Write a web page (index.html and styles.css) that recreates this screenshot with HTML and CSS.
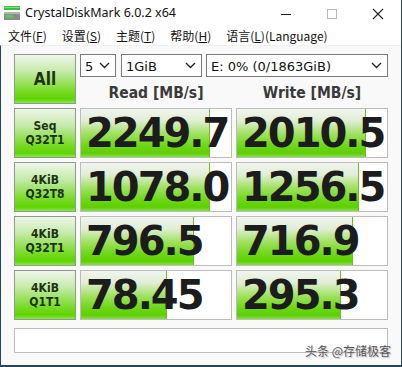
FILE: index.html
```html
<!DOCTYPE html>
<html>
<head>
<meta charset="utf-8">
<link rel="stylesheet" href="styles.css">
</head>
<body>
<div class="window">
  <div class="titlebar">
    <svg class="appicon" width="16" height="14" viewBox="0 0 16 14">
      <rect x="0" y="0" width="16" height="4" fill="#3fbf3f"/>
      <rect x="0" y="1" width="16" height="1" fill="#7fe07f"/>
      <rect x="0" y="6" width="16" height="8" fill="#8c8c8c"/>
      <rect x="0" y="6" width="16" height="2" fill="#b4b4b4"/>
      <rect x="2" y="9" width="7" height="3" fill="#59c959"/>
    </svg>
    <span class="title">CrystalDiskMark 6.0.2 x64</span>
    <div class="controls">
      <svg width="46" height="24" viewBox="0 0 46 24"><rect x="18" y="13" width="10" height="1" fill="#222"/></svg>
      <svg width="46" height="24" viewBox="0 0 46 24"><rect x="18.5" y="8.5" width="9" height="9" fill="none" stroke="#b8b8b8" stroke-width="1"/></svg>
      <svg width="46" height="24" viewBox="0 0 46 24"><path d="M18 8 L28 18 M28 8 L18 18" stroke="#222" stroke-width="1.1" fill="none"/></svg>
    </div>
  </div>
  <div class="menubar">
    <span class="menu">文件(<u>F</u>)</span>
    <span class="menu">设置(<u>S</u>)</span>
    <span class="menu">主题(<u>T</u>)</span>
    <span class="menu">帮助(<u>H</u>)</span>
    <span class="menu">语言(<u>L</u>)(Language)</span>
  </div>
  <div class="client">
    <div class="grid">
      <div class="btn all">All</div>
      <div class="selects">
        <div class="select s1"><span>5</span><svg class="chev" width="11" height="7" viewBox="0 0 11 7"><path d="M1 1 L5.5 5.5 L10 1" stroke="#222" stroke-width="1.3" fill="none"/></svg></div>
        <div class="select s2"><span>1GiB</span><svg class="chev" width="11" height="7" viewBox="0 0 11 7"><path d="M1 1 L5.5 5.5 L10 1" stroke="#222" stroke-width="1.3" fill="none"/></svg></div>
        <div class="select s3"><span>E: 0% (0/1863GiB)</span><svg class="chev" width="11" height="7" viewBox="0 0 11 7"><path d="M1 1 L5.5 5.5 L10 1" stroke="#222" stroke-width="1.3" fill="none"/></svg></div>
      </div>
      <div class="head">Read [MB/s]</div>
      <div class="head">Write [MB/s]</div>

      <div class="btn label">Seq<br>Q32T1</div>
      <div class="val"><div class="bar" style="width:86%"></div><span class="num">2249.7</span></div>
      <div class="val"><div class="bar" style="width:86%"></div><span class="num">2010.5</span></div>

      <div class="btn label">4KiB<br>Q32T8</div>
      <div class="val"><div class="bar" style="width:86%"></div><span class="num">1078.0</span></div>
      <div class="val"><div class="bar" style="width:81%"></div><span class="num">1256.5</span></div>

      <div class="btn label">4KiB<br>Q32T1</div>
      <div class="val"><div class="bar" style="width:75%"></div><span class="num">796.5</span></div>
      <div class="val"><div class="bar" style="width:77%"></div><span class="num">716.9</span></div>

      <div class="btn label">4KiB<br>Q1T1</div>
      <div class="val"><div class="bar" style="width:57%"></div><span class="num">78.45</span></div>
      <div class="val"><div class="bar" style="width:69%"></div><span class="num">295.3</span></div>

      <div class="comment"></div>
    </div>
    <div class="watermark">头条 @存储极客</div>
  </div>
</div>
</body>
</html>
```

FILE: styles.css
```css
* { box-sizing: border-box; }
html, body { margin: 0; padding: 0; }
body {
  width: 402px;
  height: 367px;
  overflow: hidden;
  background: #fff;
  font-family: "Noto Sans", "Noto Sans CJK SC", sans-serif;
}
.window {
  width: 402px;
  height: 367px;
  display: flex;
  flex-direction: column;
  border-right: 1px solid #2a4a5c;
  background: #fff;
}
.titlebar {
  height: 25px;
  display: flex;
  align-items: center;
  flex-shrink: 0;
}
.appicon { margin-left: 4px; margin-top: 0px; }
.title {
  margin-left: 5px;
  font-size: 12.5px;
  color: #111;
  font-family: "Noto Sans", sans-serif;
}
.controls {
  margin-left: auto;
  display: flex;
  margin-right: 0px;
}
.controls svg { display: block; }
.menubar {
  height: 20px;
  display: flex;
  align-items: center;
  gap: 15px;
  padding-left: 8px;
  flex-shrink: 0;
  font-size: 12px;
  color: #111;
  font-family: "Noto Sans CJK SC", sans-serif;
}
.menu u { text-decoration: underline; text-underline-offset: 1px; }
.client {
  flex: 1;
  position: relative;
  background: #f9f9f9;
  border-left: 1px solid #24475a;
  border-bottom: 2px solid #24475a;
  border-top: 1px solid #f0f0f0;
  padding: 8px 0 0 13px;
}
.grid {
  display: grid;
  grid-template-columns: 62px 152px 152px;
  grid-template-rows: 23px 23px 50px 50px 50px 50px 29px;
  column-gap: 4px;
  row-gap: 4px;
}
.btn {
  border: 1px solid #8f9a8c;
  background: linear-gradient(to bottom, #eef6ea 0%, #c4eaa8 35%, #78db26 75%, #5fd400 92%, #8be84e 100%);
  display: flex;
  align-items: center;
  justify-content: center;
  text-align: center;
  color: #1c3410;
  font-family: "DejaVu Sans Condensed", "DejaVu Sans", sans-serif;
  font-weight: bold;
}
.all {
  grid-row: 1 / span 2;
  font-size: 17px;
}
.label {
  font-size: 12px;
  line-height: 14px;
}
.selects {
  grid-column: 2 / span 2;
  display: flex;
  gap: 4px;
}
.select {
  height: 23px;
  border: 1px solid #7a7a7a;
  background: #fff;
  display: flex;
  align-items: center;
  justify-content: space-between;
  padding: 0 5px 0 4px;
  font-size: 13px;
  color: #111;
  font-family: "DejaVu Sans", sans-serif;
}
.select span { margin-top: 1px; }
.s1 { width: 36px; }
.s2 { width: 81px; margin-left: 1px; }
.s3 { flex: 1; }
.chev { display: block; }
.head {
  display: flex;
  align-items: center;
  justify-content: center;
  font-family: "DejaVu Sans Condensed", "DejaVu Sans", sans-serif;
  font-weight: bold;
  font-size: 15.5px;
  color: #3a3a3a;
}
.val {
  position: relative;
  border: 1px solid #bdbdbd;
  background: #fff;
  overflow: hidden;
  display: flex;
  align-items: center;
}
.bar {
  position: absolute;
  left: 0;
  top: 0;
  bottom: 0;
  background: linear-gradient(to bottom, #f2f4f0 0%, #dfeed4 25%, #a4e266 50%, #6fd81a 75%, #5ecf00 92%, #86df46 100%);
  border-right: 1px solid #6dbb2a;
}
.num {
  position: relative;
  margin-left: 5px;
  font-family: "DejaVu Sans", sans-serif;
  font-weight: bold;
  font-size: 40px;
  letter-spacing: -2px;
  color: #1c1c1c;
  line-height: 1;
  white-space: nowrap;
}
.comment {
  grid-column: 1 / span 3;
  margin-top: 4px;
  border: 1px solid #bdbdbd;
  background: #fff;
}
.watermark {
  position: absolute;
  right: 10px;
  bottom: 6px;
  font-size: 12px;
  color: #555;
  font-family: "Noto Sans CJK SC", sans-serif;
  text-shadow: 0 0 1px #fff, 1px 1px 1px #bbb;
}
```
